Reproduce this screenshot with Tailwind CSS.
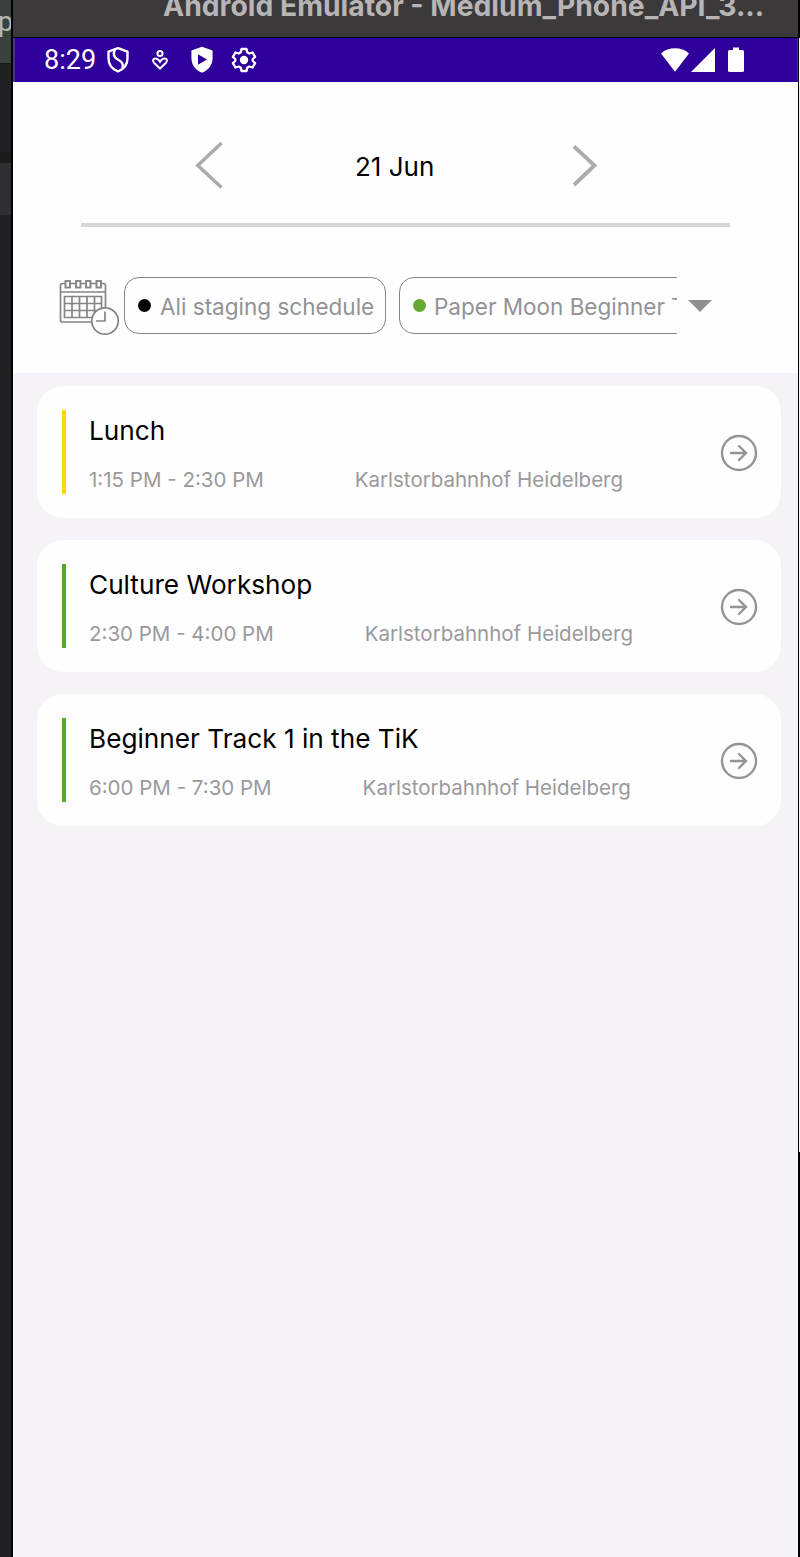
<!DOCTYPE html>
<html lang="en">
<head>
    <meta charset="UTF-8">
    <meta name="viewport" content="width=device-width, initial-scale=1.0">
    <title>Schedule</title>
    <script src="https://cdn.jsdelivr.net/npm/@tailwindcss/browser@4"></script>
</head>
<body class="bg-black font-['Inter',sans-serif]">

    <div class="flex w-[800px] h-[1557px] overflow-hidden">

        <!-- Window behind the emulator, left edge -->
        <div class="w-[13px] shrink-0 flex flex-col bg-[#212024] border-r-2 border-black overflow-hidden">
            <div class="h-[63px] shrink-0 bg-[#3b413d] -ml-[2px] text-[#b4b8b4] text-[27px] leading-[44px] font-['Roboto',sans-serif]">p</div>
            <div class="h-[89px] shrink-0 border-t border-[#19191b]"></div>
            <div class="h-[11px] shrink-0 bg-[#1b1b1e]"></div>
            <div class="h-[52px] shrink-0 bg-[#302f33]"></div>
        </div>

        <!-- Emulator -->
        <div class="w-[785px] shrink-0 flex flex-col bg-[#f5f3f7]">

            <!-- Title bar -->
            <div class="h-[38px] shrink-0 bg-[#3b393a] border-b border-black overflow-hidden">
                <p class="-mt-[12px] pl-[150px] text-[28.3px] leading-[36px] font-bold text-[#b7b5b6] whitespace-nowrap">Android Emulator - Medium_Phone_API_3...</p>
            </div>

            <!-- Status bar -->
            <div class="h-[44px] shrink-0 flex items-center bg-[#2f009c] border-l-2 border-r border-[#4a2ba6] pl-[29px] pr-[53px] text-white">
                <span class="w-[62px] text-[27px] leading-[44px] font-['Roboto',sans-serif]">8:29</span>
                <svg class="w-6 h-[28px]" viewBox="0 0 24 28" fill="none" stroke="currentColor" stroke-width="2.4" stroke-linejoin="round">
                    <path d="M12 2.2 2.5 5.6V12c0 6.500 4 11.300 9.500 13.500 5.500-2.200 9.500-7 9.500-13.500V5.600z"/>
                    <path d="M9 3.500c-2.500 5-.5 8.500 3.500 10.500 3.500 1.700 5 4.500 4 8"/>
                </svg>
                <svg class="ml-[21px] w-[18px] h-[22px]" viewBox="0 0 18 22" fill="none" stroke="currentColor" stroke-width="2">
                    <circle cx="9" cy="4.500" r="2.600"/>
                    <path d="M9 19.500 3 13.700C.8 11.400 2.500 9.300 4.600 9.500c2 .2 3.400 1.500 4.400 3.200 1-1.700 2.400-3 4.400-3.200 2.100-.2 3.800 1.900 1.600 4.200z"/>
                </svg>
                <svg class="ml-[21px] w-6 h-[28px]" viewBox="0 0 24 28" fill="currentColor" fill-rule="evenodd">
                    <path d="M12 .8 1.400 4.600V12c0 7 4.500 12.500 10.600 14.800C18.100 24.500 22.600 19 22.600 12V4.600zM8 8.300 17 13.500 8 18.700z"/>
                </svg>
                <svg class="ml-[17px] w-[26px] h-[26px]" viewBox="0 0 26 26" fill="none" stroke="currentColor" stroke-width="2.300" stroke-linejoin="round">
                    <path d="M10.500 2h5l.7 3.200 2.200 1.300 3.200-1 2.500 4.300L21.700 12v2l2.400 2.200-2.500 4.300-3.200-1-2.200 1.300-.7 3.200h-5l-.7-3.200-2.200-1.300-3.200 1-2.500-4.300L4.300 14v-2L1.900 9.800l2.500-4.300 3.200 1 2.200-1.300z"/>
                    <circle cx="13" cy="13" r="4.200" fill="currentColor" stroke="none"/>
                </svg>
                <div class="ml-auto flex items-center">
                    <svg class="w-[30px] h-6" viewBox="0 0 30 24" fill="currentColor"><path d="M1 5.500C5 1.800 9.500.3 15 .3S25 1.800 29 5.500L15 23.700z"/></svg>
                    <svg class="ml-[1px] w-6 h-6" viewBox="0 0 24 24" fill="currentColor"><path d="M24 0v24H0z"/></svg>
                    <svg class="ml-[13px] w-4 h-[26px]" viewBox="0 0 16 26" fill="currentColor"><path d="M5 .5h6v2.500h3.500Q16 3 16 4.500v19q0 1.500-1.500 1.500h-13Q0 25 0 23.500v-19Q0 3 1.500 3H5z"/></svg>
                </div>
            </div>

            <!-- Date picker and schedule filter -->
            <div class="h-[291px] shrink-0 bg-[#fefefe]">
                <div class="h-[141px] pt-[58px] pl-[180px] pr-[200px] flex">
                    <svg class="w-[32px] h-[50px] text-[#ababad]" viewBox="0 0 32 50" fill="none" stroke="currentColor" stroke-width="3.500"><path d="M28.500 3 4.800 25.500l23.700 22"/></svg>
                    <p class="ml-[130px] w-[90px] text-[26px] leading-[53px] text-black whitespace-nowrap">21 Jun</p>
                    <svg class="ml-auto w-[32px] h-[50px] text-[#ababad]" viewBox="0 0 32 50" fill="none" stroke="currentColor" stroke-width="3.800"><path d="M8 6.500 28.500 25.500 8 45"/></svg>
                </div>
                <div class="ml-[68px] w-[649px] h-1 bg-[#d7d6d9]"></div>

                <div class="mt-[49px] flex items-start">
                    <svg class="ml-[45px] w-[62px] h-[60px] text-[#858487]" viewBox="0 0 62 60" fill="none" stroke="currentColor" stroke-width="1.700">
                        <rect x="2.500" y="7.500" width="45" height="38.500" rx="2"/>
                        <path d="M2.500 16h45"/>
                        <g fill="#fefefe" stroke-width="1.900">
                            <rect x="7.500" y="5" width="4.500" height="6.500"/>
                            <rect x="18" y="5" width="4.500" height="6.500"/>
                            <rect x="28" y="5" width="4.500" height="6.500"/>
                            <rect x="38.500" y="5" width="4.500" height="6.500"/>
                        </g>
                        <path d="M6.500 20.500h37v21h-37zM14 20.500v21M21.500 20.500v21M29 20.500v21M36.500 20.500v21M6.500 27.500h37M6.500 34.500h37"/>
                        <circle cx="47" cy="45" r="13.200" fill="#fefefe"/>
                        <path d="M47 35.500V45h-9"/>
                    </svg>
                    <div class="ml-[4px] mt-[1px] w-[553px] flex gap-[13px] overflow-hidden">
                        <div class="w-[262px] h-[57px] shrink-0 flex items-center rounded-[15px] border border-[#858487] pl-[13px]">
                            <span class="size-[13px] rounded-full bg-black"></span>
                            <span class="ml-[9px] mt-[2px] text-[22.5px] text-[#939295] whitespace-nowrap">Ali staging schedule</span>
                        </div>
                        <div class="w-[340px] h-[57px] shrink-0 flex items-center rounded-[15px] border border-[#858487] pl-[13px]">
                            <span class="size-[13px] rounded-full bg-[#67a832]"></span>
                            <span class="ml-[8px] mt-[2px] text-[22.5px] text-[#939295] whitespace-nowrap">Paper Moon Beginner Track</span>
                        </div>
                    </div>
                    <svg class="ml-[11px] mt-[24px] w-[24px] h-[12px]" viewBox="0 0 24 12" fill="#8f8e92"><path d="M0 0h24L12 12z"/></svg>
                </div>
            </div>

            <!-- Events -->
            <div class="pt-[13px] pl-6 pr-[17px] flex flex-col gap-[22px]">
                <div class="h-[132px] flex items-center rounded-[26px] bg-[#fefefe] pl-[25px] pr-[23px]">
                    <div class="w-1 h-[84px] bg-[#fbd60c]"></div>
                    <div class="ml-[23px] pt-[6px]">
                        <h2 class="text-[26.2px] leading-[40px] text-black">Lunch</h2>
                        <p class="mt-[9px] flex gap-[91px] text-[20.5px] leading-[40px] text-[#9a999c]"><span>1:15 PM - 2:30 PM</span><span>Karlstorbahnhof Heidelberg</span></p>
                    </div>
                    <svg class="ml-auto mt-[2px] w-[38px] h-[38px] text-[#949396]" viewBox="0 0 38 38" fill="none" stroke="currentColor" stroke-width="2.400"><circle cx="19" cy="19" r="17"/><path d="M11 19h15M19 12l7 7-7 7" stroke-linecap="round"/></svg>
                </div>
                <div class="h-[132px] flex items-center rounded-[26px] bg-[#fefefe] pl-[25px] pr-[23px]">
                    <div class="w-1 h-[84px] bg-[#55a82a]"></div>
                    <div class="ml-[23px] pt-[6px]">
                        <h2 class="text-[26.2px] leading-[40px] text-black">Culture Workshop</h2>
                        <p class="mt-[9px] flex gap-[91px] text-[20.5px] leading-[40px] text-[#9a999c]"><span>2:30 PM - 4:00 PM</span><span>Karlstorbahnhof Heidelberg</span></p>
                    </div>
                    <svg class="ml-auto mt-[2px] w-[38px] h-[38px] text-[#949396]" viewBox="0 0 38 38" fill="none" stroke="currentColor" stroke-width="2.400"><circle cx="19" cy="19" r="17"/><path d="M11 19h15M19 12l7 7-7 7" stroke-linecap="round"/></svg>
                </div>
                <div class="h-[132px] flex items-center rounded-[26px] bg-[#fefefe] pl-[25px] pr-[23px]">
                    <div class="w-1 h-[84px] bg-[#55a82a]"></div>
                    <div class="ml-[23px] pt-[6px]">
                        <h2 class="text-[26.2px] leading-[40px] text-black">Beginner Track 1 in the TiK</h2>
                        <p class="mt-[9px] flex gap-[91px] text-[20.5px] leading-[40px] text-[#9a999c]"><span>6:00 PM - 7:30 PM</span><span>Karlstorbahnhof Heidelberg</span></p>
                    </div>
                    <svg class="ml-auto mt-[2px] w-[38px] h-[38px] text-[#949396]" viewBox="0 0 38 38" fill="none" stroke="currentColor" stroke-width="2.400"><circle cx="19" cy="19" r="17"/><path d="M11 19h15M19 12l7 7-7 7" stroke-linecap="round"/></svg>
                </div>
            </div>
        </div>

        <!-- Window behind the emulator, right edge -->
        <div class="w-[2px] shrink-0 border-l border-black">
            <div class="mt-[38px] h-[1114px] bg-[#f5f3f7]"></div>
        </div>
    </div>

</body>
</html>
